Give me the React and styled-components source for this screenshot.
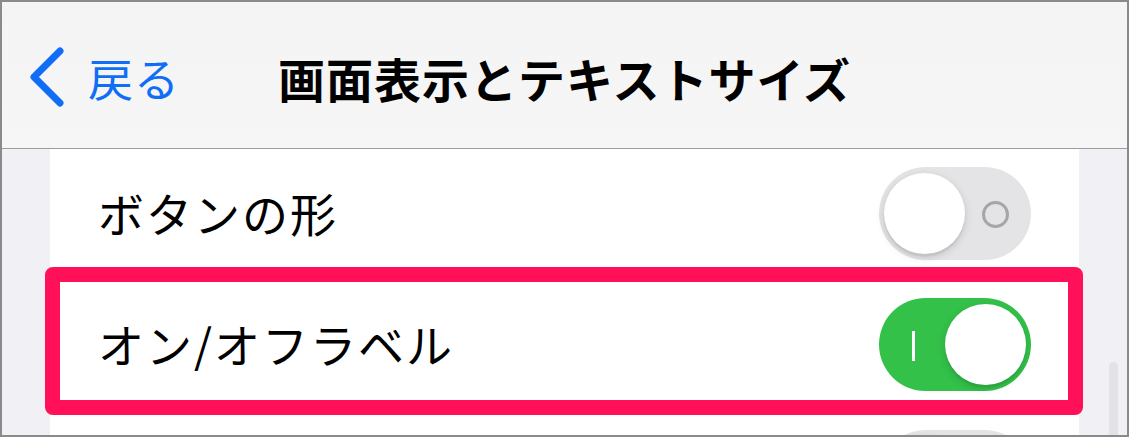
import React from 'react';
import styled, { createGlobalStyle } from 'styled-components';

const GlobalStyle = createGlobalStyle`
  html, body {
    margin: 0;
    padding: 0;
    background: #ffffff;
  }
  * {
    box-sizing: border-box;
  }
`;

const Frame = styled.div`
  position: relative;
  width: 1129px;
  height: 437px;
  border: 2px solid #8a8a8a;
  overflow: hidden;
  display: flex;
  flex-direction: column;
  font-family: 'Noto Sans CJK JP', 'Noto Sans', sans-serif;
  color: #000;
`;

const NavBar = styled.header`
  position: relative;
  height: 147px;
  flex-shrink: 0;
  display: flex;
  align-items: center;
  justify-content: center;
  padding-top: 6px;
  background: linear-gradient(180deg, #f4f4f4 0%, #f6f6f6 100%);
  border-bottom: 1px solid #9d9d9d;
`;

const BackButton = styled.div`
  position: absolute;
  left: 26px;
  top: 6px;
  bottom: 0;
  display: flex;
  align-items: center;
  gap: 20px;
  color: #0f6ef5;
  font-size: 45px;
  line-height: 1;
  letter-spacing: 1px;
  padding-bottom: 2px;
`;

const Title = styled.h1`
  margin: 0;
  font-size: 47px;
  font-weight: 700;
  line-height: 1;
  letter-spacing: 1px;
  padding-bottom: 2px;
`;

const Grouped = styled.main`
  flex: 1;
  background: #f0f0f5;
  padding: 0 48px;
  overflow: hidden;
`;

const Card = styled.section`
  background: #ffffff;
  height: 100%;
  overflow: hidden;
`;

const Row = styled.div`
  height: ${p => p.h}px;
  display: flex;
  align-items: center;
  justify-content: space-between;
  padding: 0 48px 0 48px;
  border-bottom: 1px solid #d9d9dc;
`;

const Label = styled.span`
  font-size: 46px;
  line-height: 1;
  letter-spacing: 2px;
  padding-bottom: 4px;
`;

const Track = styled.div`
  position: relative;
  width: 152px;
  height: 93px;
  border-radius: 47px;
  flex-shrink: 0;
  background: ${p => (p.on ? '#33c14a' : '#e4e4e6')};
`;

const Knob = styled.div`
  position: absolute;
  top: 6px;
  left: ${p => (p.on ? '66px' : '5px')};
  width: 81px;
  height: 81px;
  border-radius: 50%;
  background: #ffffff;
  box-shadow: 0 3px 8px rgba(0, 0, 0, 0.15), 0 3px 1px rgba(0, 0, 0, 0.05);
`;

const OnMark = styled.span`
  position: absolute;
  left: 33px;
  top: 33px;
  width: 3px;
  height: 30px;
  background: #ffffff;
`;

const OffMark = styled.span`
  position: absolute;
  left: 103px;
  top: 34px;
  width: 27px;
  height: 27px;
  border-radius: 50%;
  border: 3px solid #a6a6a6;
`;

const Highlight = styled.div`
  position: absolute;
  left: 43px;
  top: 265px;
  width: 1038px;
  height: 148px;
  border: 15px solid #ff1058;
  border-radius: 8px;
  pointer-events: none;
`;

const ScrollThumb = styled.div`
  position: absolute;
  left: 1107px;
  top: 360px;
  width: 9px;
  height: 120px;
  border-radius: 5px;
  background: #e2e2e7;
`;

function Chevron() {
  return (
    <svg width="40" height="62" viewBox="0 0 40 62">
      <path
        d="M32 5 L6 31 L32 57"
        fill="none"
        stroke="#0f6ef5"
        strokeWidth="7"
        strokeLinecap="round"
        strokeLinejoin="round"
      />
    </svg>
  );
}

function Toggle({ on }) {
  return (
    <Track on={on ? 1 : 0}>
      {on ? <OnMark /> : <OffMark />}
      <Knob on={on ? 1 : 0} />
    </Track>
  );
}

const rows = [
  { label: 'ボタンの形', on: false, h: 130 },
  { label: 'オン/オフラベル', on: true, h: 132 },
  { label: '', on: false, h: 132 },
];

export default function App() {
  return (
    <>
      <GlobalStyle />
      <Frame>
        <NavBar>
          <BackButton>
            <Chevron />
            <span>戻る</span>
          </BackButton>
          <Title>画面表示とテキストサイズ</Title>
        </NavBar>
        <Grouped>
          <Card>
            {rows.map((r, i) => (
              <Row key={i} h={r.h}>
                <Label>{r.label}</Label>
                <Toggle on={r.on} />
              </Row>
            ))}
          </Card>
        </Grouped>
        <ScrollThumb />
        <Highlight />
      </Frame>
    </>
  );
}
